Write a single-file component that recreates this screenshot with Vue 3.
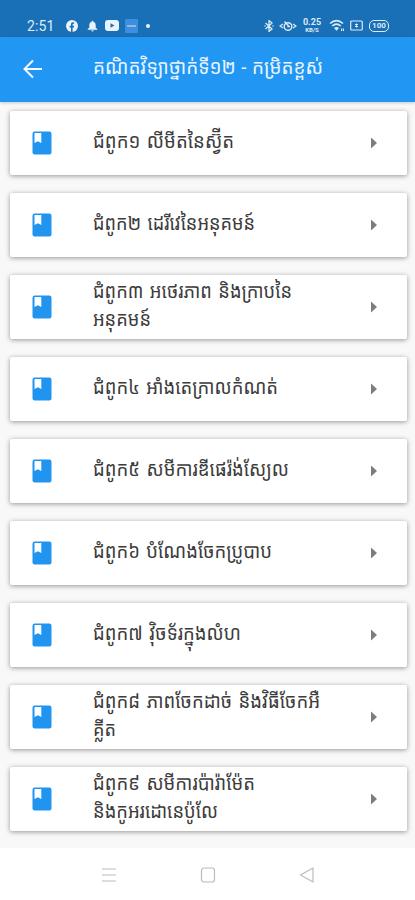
<script setup>
const chapters = [
  { lines: ['ជំពូក១ លីមីតនៃស្វ៊ីត'], widths: [141] },
  { lines: ['ជំពូក២ ដេរីវេនៃអនុគមន៍'], widths: [162] },
  { lines: ['ជំពូក៣ អថេរភាព និងក្រាបនៃ', 'អនុគមន៍'], widths: [199, 58] },
  { lines: ['ជំពូក៤ អាំងតេក្រាលកំណត់'], widths: [185] },
  { lines: ['ជំពូក៥ សមីការឌីផេរ៉ង់ស្យែល'], widths: [196] },
  { lines: ['ជំពូក៦ បំណែងចែកប្រូបាប'], widths: [179] },
  { lines: ['ជំពូក៧ វ៉ិចទ័រក្នុងលំហ'], widths: [148] },
  { lines: ['ជំពូក៨ ភាពចែកដាច់ និងវិធីចែកអឺ', 'គ្លីត'], widths: [227, 23] },
  { lines: ['ជំពូក៩ សមីការប៉ារ៉ាម៉ែត', 'និងកូអរដោនេប៉ូលែ'], widths: [162, 125] },
]
</script>

<template>
  <div class="screen">
    <div class="status">
      <span class="time">2:51</span>
      <svg class="ic fb" viewBox="0 0 12 12"><circle cx="6" cy="6" r="6" fill="#e8f3fb" /><path d="M5 12V7.4H3.6V5.7H5V4.6C5 3 5.8 2.3 7.1 2.3h1v1.5h-.7c-.6 0-.8.3-.8.9v1h1.5l-.2 1.7H6.6V12z" fill="#1a6fb5" /></svg>
      <svg class="ic bell" viewBox="0 0 12 12"><path d="M6 .3a1 1 0 0 1 1 1A3.6 3.6 0 0 1 9.5 5v3l1.7 1.4v.8H.8v-.8L2.500 8V5A3.600 3.600 0 0 1 5 1.300a1 1 0 0 1 1-1zM4.700 10.600h2.600a1.300 1.300 0 0 1-2.600 0z" fill="#e8f3fb" /></svg>
      <svg class="ic yt" viewBox="0 0 14 11"><rect width="14" height="11" rx="3" fill="#e8f3fb" /><path d="M5.500 3.200v4.600L9.500 5.500z" fill="#1a6fb5" /></svg>
      <span class="app"><i></i></span>
      <span class="dot"></span>
      <span class="grow"></span>
      <svg class="ic bt" viewBox="0 0 10 12"><path d="M1.500 3l6.500 6-3 2.400V.6L8 3 1.500 9M.5 6h1M8.500 6h1" fill="none" stroke="#dcecf7" stroke-width="1.300" /></svg>
      <svg class="ic eye" viewBox="0 0 18 12"><path d="M4 4L1 6l3 2M14 4L17 6l-3 2" fill="none" stroke="#dcecf7" stroke-width="1.300" /><circle cx="9" cy="6.500" r="3.800" fill="none" stroke="#dcecf7" stroke-width="1.400" /><path d="M5.500 1.500l4.500 5M9 4.500v2.200h2" fill="none" stroke="#dcecf7" stroke-width="1.200" /></svg>
      <span class="speed"><b>0.25</b><small>KB/S</small></span>
      <svg class="ic wifi" viewBox="0 0 16 13"><path d="M1 4.500Q7.500-1.200 14 4.500M3.200 7Q7.500 3.300 11.800 7" fill="none" stroke="#dcecf7" stroke-width="1.600" /><path d="M5 9q2.500-2 5 0l-2.500 2.700zM12 9.500h1.200v2.500H12zM14 9.500h1v2.500h-1z" fill="#dcecf7" /></svg>
      <svg class="ic sim" viewBox="0 0 13 11"><rect x=".7" y="1" width="11.600" height="9" rx="1" fill="none" stroke="#dcecf7" stroke-width="1.200" /><path d="M5 4l3 3M8 4L5 7M6.500 3.500v4" stroke="#dcecf7" stroke-width="1" /></svg>
      <span class="battery">100</span>
    </div>
    <header class="bar">
      <svg class="back" viewBox="0 0 20 20"><path d="M19 10H2M10 1.500L1.500 10 10 18.500" fill="none" stroke="#f4faff" stroke-width="2" /></svg>
      <svg class="title" viewBox="0 0 240 36"><text x="0" y="23" textLength="230" lengthAdjust="spacingAndGlyphs">គណិតវិទ្យាថ្នាក់ទី១២ - កម្រិតខ្ពស់</text></svg>
    </header>
    <main class="list">
      <article v-for="c in chapters" :key="c.lines[0]" class="card">
        <svg class="book" viewBox="0 0 20 24"><rect x=".5" y=".5" width="19" height="23" rx="2.200" fill="#2194f0" /><path d="M2.500 2H9.300v10L5.900 10.300l-3.400 1.700z" fill="#fff" /></svg>
        <div class="label">
          <svg v-for="(l, i) in c.lines" :key="l" class="line" viewBox="0 0 240 28"><text x="0" y="19" :textLength="c.widths[i]" lengthAdjust="spacingAndGlyphs">{{ l }}</text></svg>
        </div>
        <svg class="arrow" viewBox="0 0 6 12"><path d="M0 .5l6 5.500-6 5.500z" fill="#7d7d7d" /></svg>
      </article>
    </main>
    <nav class="nav">
      <svg viewBox="0 0 16 16"><path d="M1 2h14M1 8h14M1 14h14" /></svg>
      <svg viewBox="0 0 16 16"><rect x="1.500" y="1" width="13" height="14" rx="2.500" /></svg>
      <svg viewBox="0 0 16 16"><path d="M14 1v14L1.500 8z" stroke-linejoin="round" /></svg>
    </nav>
  </div>
</template>

<style>
body { margin: 0; background: #fff; }
</style>

<style scoped>
.screen { width: 415px; height: 900px; overflow: hidden; display: flex; flex-direction: column; background: #f8f8f8; font-family: Roboto, "Noto Sans", "Noto Sans Khmer", "DejaVu Sans", sans-serif; }
.status { box-sizing: border-box; height: 37px; flex: none; display: flex; align-items: center; padding: 14px 26px 0 27px; background: #1a70b7; color: #dcecf7; }
svg { display: block; flex: none; }
.time { width: 39px; font-size: 14px; line-height: 16px; letter-spacing: .1px; }
.fb { width: 12px; height: 12px; margin-right: 9px; }
.bell { width: 11px; height: 12px; margin-right: 7px; }
.yt { width: 14px; height: 11px; margin-right: 6px; }
.app { width: 13px; height: 14px; display: flex; align-items: center; justify-content: center; background: #3c8ee0; border-radius: 1px; }
.app i { width: 9px; height: 2px; background: #91b9dc; }
.dot { width: 4px; height: 4px; margin-left: 8px; border-radius: 50%; background: #e8f3fb; }
.grow { flex: 1; }
.bt { width: 10px; height: 12px; margin-right: 5px; }
.eye { width: 18px; height: 12px; margin-right: 5px; }
.speed { width: 20px; margin-right: 7px; display: flex; flex-direction: column; align-items: center; }
.speed b { font-size: 9px; line-height: 8px; }
.speed small { font-size: 6px; line-height: 7px; font-weight: 700; }
.wifi { width: 16px; height: 13px; margin-right: 5px; }
.sim { width: 13px; height: 11px; margin-right: 6px; }
.battery { box-sizing: border-box; width: 20px; height: 12px; border: 1.500px solid #dcecf7; border-radius: 5px; font-size: 8px; line-height: 10px; font-weight: 700; text-align: center; display: flex; justify-content: center; }
.bar { box-sizing: border-box; height: 65px; flex: none; display: flex; padding: 14px 0 0 23px; background: #2296f3; box-shadow: 0 1px 3px rgba(0, 0, 0, .2); z-index: 1; }
.back { width: 20px; height: 20px; margin-top: 8px; }
.title { width: 240px; height: 36px; margin-left: 50px; overflow: visible; }
.title text { font-size: 20px; fill: #e8f5ff; word-spacing: 1px; }
.list { flex: none; box-sizing: border-box; height: 746px; padding: 8.600px 8.500px 0 9.500px; display: flex; flex-direction: column; gap: 18px; }
.card { box-sizing: border-box; height: 64px; flex: none; display: flex; align-items: center; padding: 0 30px 0 22px; border-radius: 2px; background: #fff; box-shadow: 0 1px 5px rgba(0, 0, 0, .4); }
.book { width: 20px; height: 24px; margin-top: 1px; }
.label { width: 240px; margin-left: 41px; flex: 1; }
.line { width: 240px; height: 28px; overflow: visible; }
.line text { font-size: 20px; fill: #3c3c3c; word-spacing: 2px; }
.arrow { width: 6px; height: 12px; margin-top: 1px; }
.nav { flex: none; box-sizing: border-box; height: 52px; display: flex; gap: 83px; padding: 19px 0 0 100.500px; background: #fff; }
.nav svg { width: 16px; height: 16px; fill: none; stroke: #bcbcbc; stroke-width: 1.200; }
</style>
